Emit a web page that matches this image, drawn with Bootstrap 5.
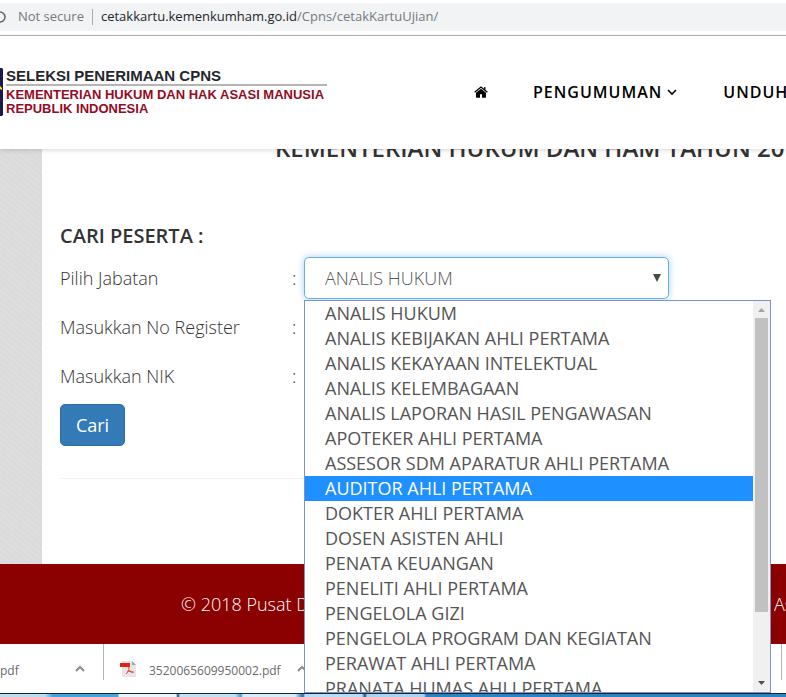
<!DOCTYPE html>
<html lang="id">
<head>
<meta charset="utf-8">
<meta name="viewport" content="width=device-width, initial-scale=1">
<title>Cetak Kartu Ujian</title>
<link href="https://cdn.jsdelivr.net/npm/bootstrap@5.3.0/dist/css/bootstrap.min.css" rel="stylesheet">
<style>
body{font-family:"Open Sans","Noto Sans",sans-serif;font-size:18px;font-weight:300;color:#333;background:#fff}
a{text-decoration:none}
.address-bar{padding:3px 0 4px;border-bottom:1px solid #b5b6b7}
.address-field{height:28px;background:#f1f3f4;font-size:13px;font-weight:400;color:#757a7e}
.address-info{width:6px;overflow:hidden}
.address-info svg{margin-left:-6px}
.address-split{width:1px;height:16px;background:#a9adb0;margin:0 8px}
.address-host{color:#24272a}
.site-header{height:113px;padding-bottom:2px;z-index:10;box-shadow:0 1px 5px rgba(0,0,0,.16)}
.brand-emblem{width:3px;height:48px;margin-right:3px}
.brand-text{width:321px;font-family:"Liberation Sans",Arial,sans-serif;font-size:13px;font-weight:700;line-height:14px;color:#930b25}
.brand-title{font-size:15px;line-height:17px;color:#24272c;border-bottom:2px solid #b7b4b5;margin-bottom:2px}
.site-menu{margin-left:147px;gap:45px;min-width:0}
.site-menu a{font-size:16px;font-weight:600;letter-spacing:1px;color:#000}
.page-back{background:repeating-linear-gradient(40deg,#dadada 0 1px,#dedede 2px 4px,#d9d9d9 5px,#dddddd 6px 9px);padding-left:42px}
.sheet{padding:0 18px}
.page-title{margin:-18px -18px 59px 215px;font-size:24px;line-height:33px;font-weight:600;color:#333}
.form-title{font-size:20px;line-height:26px;font-weight:600;margin-bottom:8px}
.form-rows{display:grid;gap:7px}
.field-label{width:232px}
.field-colon{width:12px}
.field-box{width:365px}
.field-box .form-control,.field-box .form-select{height:42px;padding:0 20px;font-size:18px;font-weight:300;color:#555;border-color:#ccc;border-radius:5px;background-image:none}
.field-box .form-select{border-color:#66afe9;box-shadow:0 0 7px rgba(102,175,233,.6)}
.field-arrow{right:8px;top:17px}
.option-panel{top:43px;left:0;width:467px;height:393px;z-index:20;background:#fff;border:1px solid #7d92c8}
.option-list{font-weight:400;color:#555;line-height:25px;overflow:hidden}
.option-list li{padding-left:20px}
.option-list .chosen{background:#1e90ff;color:#fff}
.option-scroll{width:17px;background:#f0f0f0}
.option-thumb{width:13px;height:294px;background:#c1c1c1}
.btn-cari{--bs-btn-bg:#337ab7;--bs-btn-border-color:#2e6da4;--bs-btn-color:#fff;--bs-btn-hover-bg:#286090;height:42px;width:65px;padding:0;font-size:18px;border-radius:5px}
.sheet hr{margin:32px 0 0;border-color:#ccc}
.site-footer{height:80px;background:#8b0000;color:#fff;padding-left:181px}
.footer-end{width:12px}
.download-bar{height:49px;font-size:12px;font-weight:400;color:#6b6b6b}
.download-bar span{padding-top:5px}
.download-bar .vr{height:36px;background:#b5b5b5;opacity:1}
.download-prev{width:103px;padding-right:18px}
.download-name{margin-left:13px}
.task-bar{height:4px;border-top:1px solid #10243e;background:linear-gradient(90deg,#b8def0 0 45px,#45a4d8 53px 118px,#e8f5fb 119px 176px,#124b70 178px,#bfe3f4 180px 235px,#4a9cc9 241px,#d7eef8 243px 295px,#266b9e 303px,#b7def2 305px 362px,#174a78 365px,#a7d5ee 367px 424px,#2b83c4 426px)}
</style>
</head>
<body class="vh-100 d-flex flex-column overflow-hidden">
<div class="address-bar">
  <div class="address-field d-flex align-items-center text-nowrap">
    <span class="address-info d-flex"><svg width="12" height="12" viewBox="0 0 12 12" aria-hidden="true"><circle cx="6" cy="6" r="5" fill="none" stroke="#5f6368" stroke-width="1.5"/></svg></span>
    <span class="ms-2 ps-1">Not secure</span>
    <span class="address-split"></span>
    <span><span class="address-host">cetakkartu.kemenkumham.go.id</span>/Cpns/cetakKartuUjian/</span>
  </div>
</div>
<header class="site-header bg-white d-flex align-items-center position-relative flex-shrink-0">
  <svg class="brand-emblem flex-shrink-0" viewBox="0 0 3 48" aria-hidden="true"><path d="M0 0h2l1 1v46l-1 1H0z" fill="#1e1750"/><path d="M0 18l2 2v2l-2-1z" fill="#f4ea22"/></svg>
  <div class="brand-text flex-shrink-0 text-nowrap">
    <div class="brand-title">SELEKSI PENERIMAAN CPNS</div>
    <div>KEMENTERIAN HUKUM DAN HAK ASASI MANUSIA</div>
    <div>REPUBLIK INDONESIA</div>
  </div>
  <nav class="site-menu d-flex flex-grow-1 align-items-center text-nowrap overflow-hidden">
    <a href="#" aria-label="Beranda" class="d-flex flex-shrink-0"><svg width="14" height="12" viewBox="0 0 14 12" aria-hidden="true"><path d="M7 2.7 2 6.8V11q0 .7.7.7H6V8.3h2v3.4h3.3q.7 0 .7-.7V6.8z"/><path d="M.6 6.2 7 1l6.4 5.2M10.8 1v3" fill="none" stroke="#000" stroke-width="1.3"/></svg></a>
    <a href="#" class="d-flex align-items-center gap-1">PENGUMUMAN <svg width="12" height="8" viewBox="0 0 12 8" aria-hidden="true"><path d="M2 2l4 4 4-4" fill="none" stroke="#000" stroke-width="1.6"/></svg></a>
    <a href="#">UNDUH</a>
  </nav>
</header>
<main class="page-back flex-grow-1 d-flex">
  <div class="sheet bg-white d-flex flex-column flex-grow-1 overflow-x-visible">
    <h1 class="page-title text-nowrap overflow-hidden flex-shrink-0">KEMENTERIAN HUKUM DAN HAM TAHUN 20</h1>
    <h2 class="form-title">CARI PESERTA :</h2>
    <form>
      <div class="form-rows">
        <div class="d-flex align-items-center">
          <label class="field-label" for="jabatan">Pilih Jabatan</label><span class="field-colon">:</span>
          <div class="field-box position-relative">
            <select class="form-select" id="jabatan"><option>ANALIS HUKUM</option></select>
            <svg class="field-arrow position-absolute pe-none" width="8" height="8" viewBox="0 0 8 8" aria-hidden="true"><path d="M0 0h8L4 8z" fill="#484848"/></svg>
            <div class="option-panel position-absolute d-flex">
              <ul class="option-list list-unstyled mb-0 flex-grow-1 text-nowrap" role="listbox" aria-label="Pilih Jabatan">
                <li role="option">ANALIS HUKUM</li>
                <li role="option">ANALIS KEBIJAKAN AHLI PERTAMA</li>
                <li role="option">ANALIS KEKAYAAN INTELEKTUAL</li>
                <li role="option">ANALIS KELEMBAGAAN</li>
                <li role="option">ANALIS LAPORAN HASIL PENGAWASAN</li>
                <li role="option">APOTEKER AHLI PERTAMA</li>
                <li role="option">ASSESOR SDM APARATUR AHLI PERTAMA</li>
                <li role="option" class="chosen" aria-selected="true">AUDITOR AHLI PERTAMA</li>
                <li role="option">DOKTER AHLI PERTAMA</li>
                <li role="option">DOSEN ASISTEN AHLI</li>
                <li role="option">PENATA KEUANGAN</li>
                <li role="option">PENELITI AHLI PERTAMA</li>
                <li role="option">PENGELOLA GIZI</li>
                <li role="option">PENGELOLA PROGRAM DAN KEGIATAN</li>
                <li role="option">PERAWAT AHLI PERTAMA</li>
                <li role="option">PRANATA HUMAS AHLI PERTAMA</li>
              </ul>
              <div class="option-scroll d-flex flex-column align-items-center flex-shrink-0">
                <svg width="17" height="17" viewBox="0 0 17 17" aria-hidden="true"><path d="M5 11h7L8.500 7z" fill="#a3a3a3"/></svg>
                <div class="option-thumb"></div>
                <svg class="mt-auto" width="17" height="17" viewBox="0 0 17 17" aria-hidden="true"><path d="M5 6h7l-3.500 4z" fill="#505050"/></svg>
              </div>
            </div>
          </div>
        </div>
        <div class="d-flex align-items-center">
          <label class="field-label" for="register">Masukkan No Register</label><span class="field-colon">:</span>
          <div class="field-box"><input class="form-control" id="register" type="text"></div>
        </div>
        <div class="d-flex align-items-center">
          <label class="field-label" for="nik">Masukkan NIK</label><span class="field-colon">:</span>
          <div class="field-box"><input class="form-control" id="nik" type="text"></div>
        </div>
        <div><button class="btn btn-cari" type="button">Cari</button></div>
      </div>
    </form>
    <hr>
  </div>
</main>
<footer class="site-footer d-flex align-items-center justify-content-between text-nowrap flex-shrink-0">
  <span>© 2018 Pusat Data</span><span class="footer-end overflow-hidden">As</span>
</footer>
<div class="download-bar bg-white d-flex align-items-center text-nowrap flex-shrink-0">
  <div class="download-prev d-flex align-items-center justify-content-between"><span>pdf</span>
    <svg width="10" height="8" viewBox="0 0 10 8" aria-hidden="true"><path d="M1 6l4-4 4 4" fill="none" stroke="#8a8a8a" stroke-width="2"/></svg></div>
  <div class="vr"></div>
  <svg class="ms-3" width="16" height="16" viewBox="0 0 16 16" aria-hidden="true"><path d="M2 0h10l4 4v12H2z" fill="#e6e6e8"/><path d="M12 0l4 4h-4z" fill="#9ea3ab"/><path d="M0 2h10v4H0z" fill="#e62310"/><path d="M9 6c0 4-2 6-3 7M9 9c1 2 3 3 5 2M7 11c2-1 4-1 6 0" fill="none" stroke="#dd4a3d"/></svg>
  <span class="download-name">3520065609950002.pdf</span>
  <svg class="ms-3" width="10" height="8" viewBox="0 0 10 8" aria-hidden="true"><path d="M1 6l4-4 4 4" fill="none" stroke="#8a8a8a" stroke-width="2"/></svg>
  <div class="vr ms-auto me-1"></div>
</div>
<div class="task-bar flex-shrink-0"></div>
<script src="https://cdn.jsdelivr.net/npm/bootstrap@5.3.0/dist/js/bootstrap.bundle.min.js"></script>
</body>
</html>
